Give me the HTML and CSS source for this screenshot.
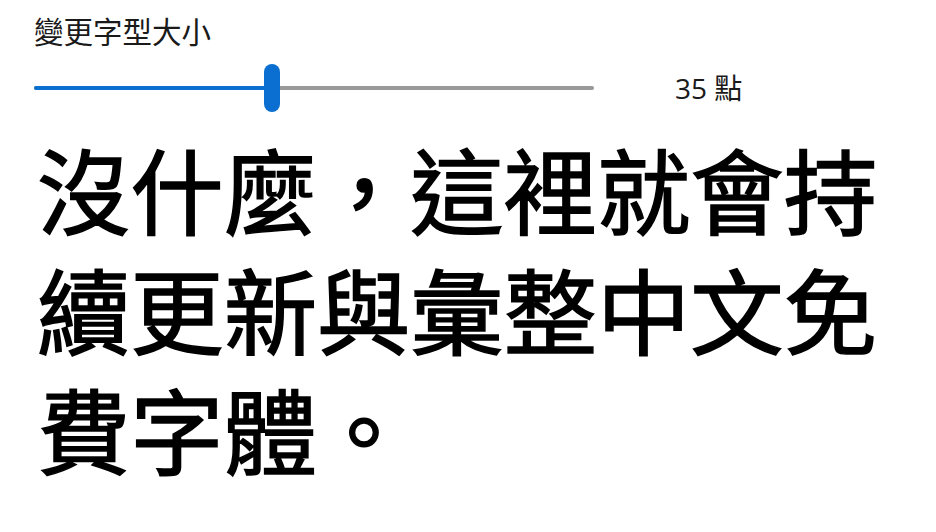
FILE: index.html
```html
<!DOCTYPE html>
<html lang="zh-Hant">
<head>
<meta charset="utf-8">
<title>變更字型大小</title>
<link rel="stylesheet" href="styles.css">
</head>
<body>
<div class="page">
  <div class="control">
    <div class="label">變更字型大小</div>
    <div class="slider-row">
      <div class="slider">
        <div class="track">
          <div class="fill" style="width: 238px"></div>
        </div>
        <div class="thumb" style="left: 230px"></div>
      </div>
      <div class="value">35 點</div>
    </div>
  </div>
  <p class="sample">沒什麼，這裡就會持續更新與彙整中文免費字體。</p>
</div>
</body>
</html>
```

FILE: styles.css
```css
html, body {
  margin: 0;
  padding: 0;
  background: #ffffff;
}
.page {
  width: 936px;
  height: 532px;
  overflow: hidden;
  font-family: "Noto Sans CJK TC", "Noto Sans", sans-serif;
  color: #000;
}
.control {
  padding: 10px 0 0 34px;
}
.label {
  font-size: 29.5px;
  line-height: 40px;
  font-weight: 400;
  color: #1a1a1a;
}
.slider-row {
  display: flex;
  align-items: center;
  height: 52px;
  margin-top: 12px;
}
.slider {
  position: relative;
  width: 560px;
  height: 48px;
  display: flex;
  align-items: center;
}
.track {
  width: 100%;
  height: 4px;
  background: #999999;
  border-radius: 2px;
}
.fill {
  height: 100%;
  background: #0a6fd0;
  border-radius: 2px 0 0 2px;
}
.thumb {
  position: absolute;
  top: 0;
  width: 16px;
  height: 48px;
  border-radius: 8px;
  background: #0a6fd0;
}
.value {
  margin-left: 81px;
  font-family: "Open Sans", "Noto Sans CJK TC", sans-serif;
  font-size: 28px;
  line-height: 36px;
  color: #1a1a1a;
}
.sample {
  margin: 14px 0 0 0;
  padding: 0 0 0 37px;
  font-size: 93.33px;
  line-height: 120px;
  font-weight: 400;
  -webkit-text-stroke: 1.5px #000;
}
```
